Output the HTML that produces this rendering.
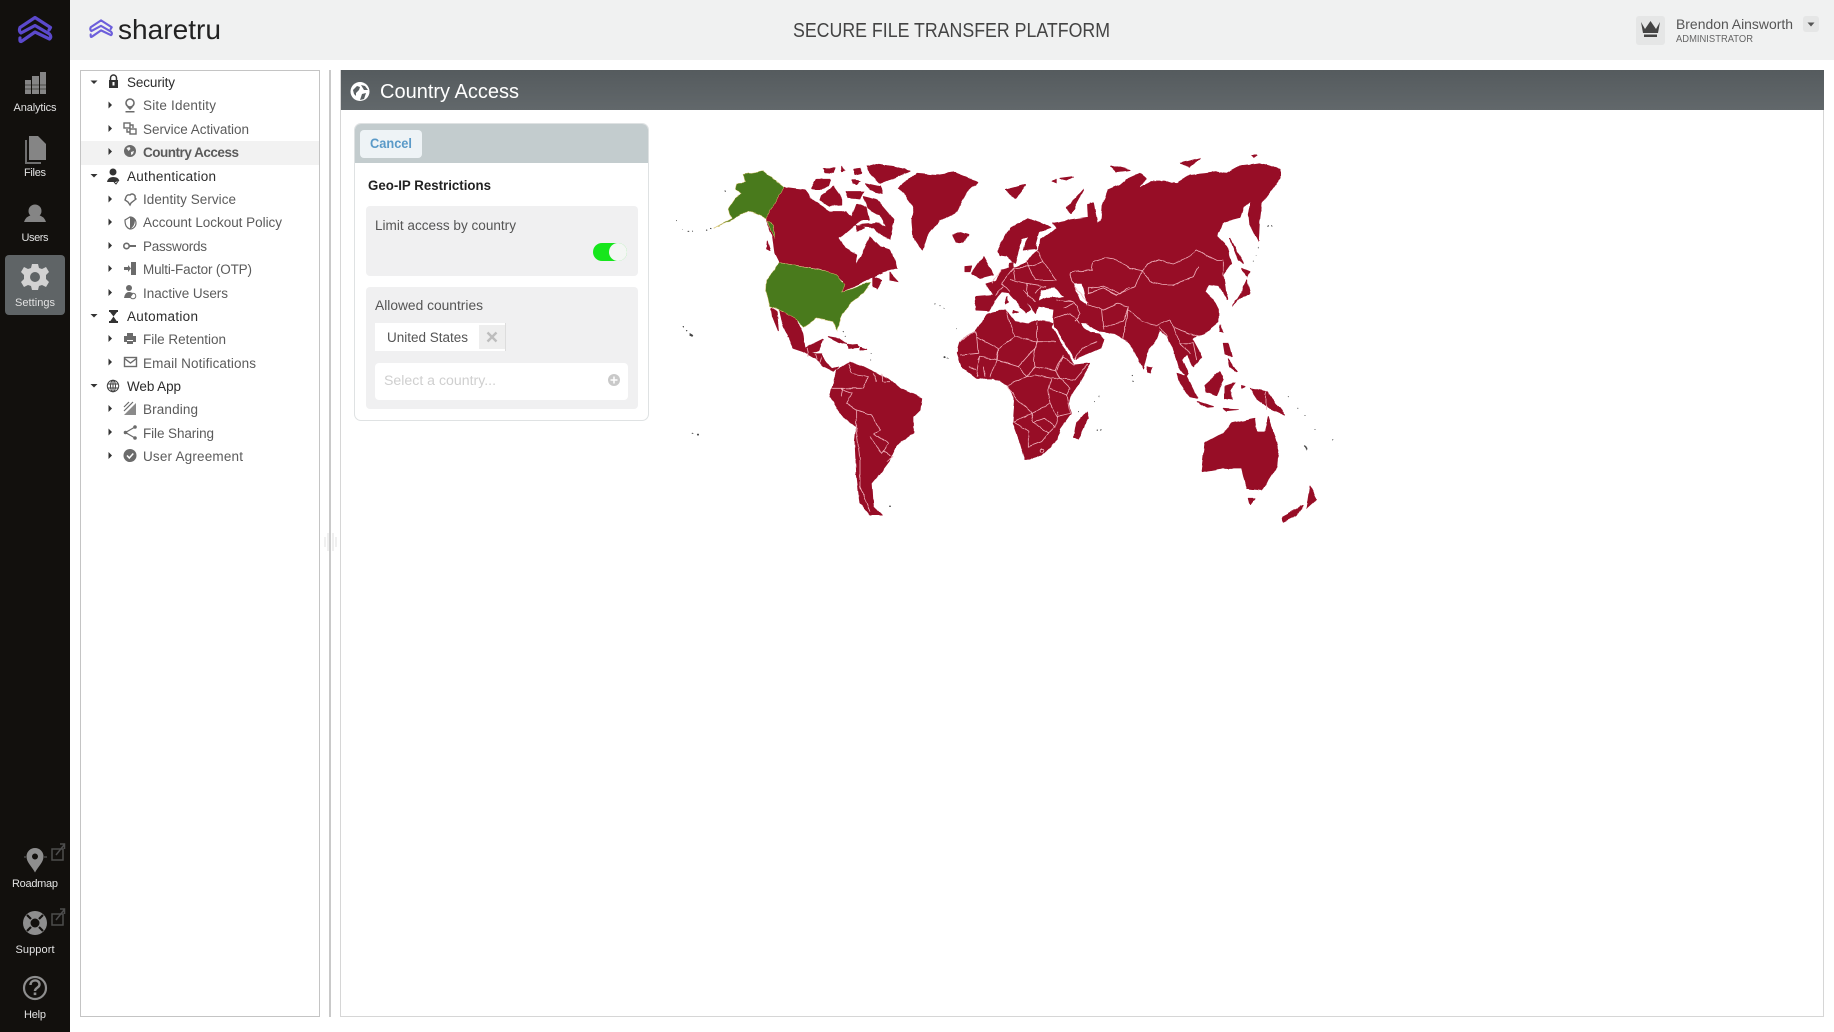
<!DOCTYPE html>
<html lang="en"><head><meta charset="utf-8"><title>Sharetru - Country Access</title>
<style>
html,body{margin:0;padding:0;background:#fff}
body{width:1834px;height:1032px;position:relative;overflow:hidden;font-family:"Liberation Sans",sans-serif}
#w{position:absolute;left:0;top:0;width:1834px;height:1032px;filter:blur(.35px)}
.b{position:absolute;box-sizing:border-box}
svg{position:absolute;left:0;top:0}
text{font-family:"Liberation Sans",sans-serif}
.t1{font-size:13.5px;fill:#2c2c2c}
.t2{font-size:13.5px;fill:#5b5b5b}
.s{font-size:11px;fill:#e2e2e2;text-anchor:middle}
.ic{fill:#6b6b6b}
.il{fill:none;stroke:#6b6b6b;stroke-width:1.4}
.ar{fill:#333}
</style></head><body><div id="w">
<div class="b" style="left:0;top:0;width:70px;height:1032px;background:#12100d"></div>
<div class="b" style="left:70px;top:0;width:1764px;height:60px;background:#f0f1f1"></div>
<div class="b" style="left:5px;top:255px;width:60px;height:60px;background:#5f6466;border-radius:4px"></div>
<div class="b" style="left:80px;top:70px;width:240px;height:947px;border:1px solid #c4c4c4"></div>
<div class="b" style="left:81px;top:141px;width:238px;height:24px;background:#f2f2f2"></div>
<div class="b" style="left:329px;top:70px;width:2px;height:947px;background:#c9c9c9"></div>
<div class="b" style="left:340px;top:70px;width:1484px;height:947px;border:1px solid #d6d6d6;border-top:0"></div>
<div class="b" style="left:341px;top:70px;width:1483px;height:40px;background:linear-gradient(#555b5e,#62686b)"></div>
<div class="b" style="left:354px;top:123px;width:295px;height:298px;border:1px solid #dfe2e3;border-radius:7px;background:#fff;overflow:hidden">
  <div class="b" style="left:0;top:0;width:295px;height:39px;background:#c3ccce"></div>
</div>
<div class="b" style="left:360px;top:130px;width:62px;height:28px;background:#eef3f6;border-radius:4px"></div>
<div class="b" style="left:366px;top:206px;width:272px;height:70px;background:#f0f0f1;border-radius:4px"></div>
<div class="b" style="left:366px;top:287px;width:272px;height:122px;background:#f0f0f1;border-radius:4px"></div>
<div class="b" style="left:593px;top:243px;width:34px;height:18px;background:#16e61c;border-radius:9px"></div>
<div class="b" style="left:609px;top:243px;width:18px;height:18px;background:#f4f6f4;border-radius:9px"></div>
<div class="b" style="left:375px;top:323px;width:131px;height:28px;background:#fff;border-right:1px solid #ddd"></div>
<div class="b" style="left:479px;top:325px;width:26px;height:24px;background:#eeeeee"></div>
<div class="b" style="left:375px;top:363px;width:253px;height:37px;background:#fff;border-radius:4px"></div>
<div class="b" style="left:1636px;top:16px;width:29px;height:29px;background:#e5e6e6;border-radius:3px"></div>
<div class="b" style="left:1803px;top:16px;width:16px;height:16px;background:#e5e6e6;border-radius:3px"></div>

<svg width="1834" height="1032" viewBox="0 0 1834 1032" xmlns="http://www.w3.org/2000/svg">
<defs>
<filter id="rough" filterUnits="userSpaceOnUse" x="-200" y="-100" width="2600" height="1500">
<feTurbulence type="fractalNoise" baseFrequency="0.035" numOctaves="2" seed="4" result="n"/>
<feDisplacementMap in="SourceGraphic" in2="n" scale="9" xChannelSelector="R" yChannelSelector="G"/>
</filter>
</defs>
<!-- sidebar logo -->
<path d="M49 30L50.500 27.500L35 17.500L20 27.500Q18.500 31 21 33L35 25.500L49.500 34Q52 37 49.500 39L35 32L22 41Q19.500 43 20 38" fill="none" stroke="#5b49cc" stroke-width="3.200" stroke-linejoin="round" stroke-linecap="round"/>
<!-- header logo -->
<g transform="translate(90 20) scale(.69) translate(-19 -17)">
<path d="M49 30L50.500 27.500L35 17.500L20 27.500Q18.500 31 21 33L35 25.500L49.500 34Q52 37 49.500 39L35 32L22 41Q19.500 43 20 38" fill="none" stroke="#6d5fdb" stroke-width="3.100" stroke-linejoin="round" stroke-linecap="round"/>
</g>
<text x="118" y="39" font-size="28" fill="#222" textLength="103" lengthAdjust="spacingAndGlyphs">sharetru</text>
<text x="793" y="37" font-size="20" fill="#444" textLength="317" lengthAdjust="spacingAndGlyphs">SECURE FILE TRANSFER PLATFORM</text>
<text x="1676" y="29" font-size="14" fill="#555" textLength="117" lengthAdjust="spacingAndGlyphs">Brendon Ainsworth</text>
<text x="1676" y="42" font-size="10" fill="#666" textLength="77" lengthAdjust="spacingAndGlyphs">ADMINISTRATOR</text>
<path d="M1641 22L1645 29L1650.500 21L1656 29L1660 22L1658 33H1643Z" fill="#444"/><rect x="1644" y="34.500" width="13" height="2.500" fill="#444"/>
<path d="M1807.500 22.500H1814.500L1811 26.500Z" fill="#555"/>

<!-- sidebar icons -->
<g fill="#858585">
<rect x="25" y="80" width="6" height="14"/><rect x="32" y="76" width="7" height="18"/><rect x="40" y="72" width="6" height="22"/>
<path d="M29 136H38L46 144V160H29Z"/><path d="M25 140H27V162H41V164H25Z" fill="#6f6f6f"/>
<circle cx="35" cy="211" r="6.500"/><path d="M24 222Q26 216 32 215H38Q44 216 46 222Z"/>
</g>
<path d="M25 85H46M25 89H46" stroke="#12100d" stroke-width=".6"/>
<text class="s" x="35" y="111" textLength="43">Analytics</text>
<text class="s" x="35" y="176" textLength="22">Files</text>
<text class="s" x="35" y="241" textLength="27">Users</text>
<text class="s" x="35" y="306" textLength="40" fill="#f2f2f2">Settings</text>
<g transform="translate(35 277)" fill="#d2d2d2">
<path d="M-3 -13H3L4 -9L7 -8L11 -10L14 -5L11 -2V2L14 5L11 10L7 8L4 9L3 13H-3L-4 9L-7 8L-11 10L-14 5L-11 2V-2L-14 -5L-11 -10L-7 -8L-4 -9Z"/>
<circle r="5" fill="#5f6466"/>
</g>
<!-- roadmap -->
<path d="M35 848a8.500 8.500 0 0 1 8.500 8.500c0 6-5.500 10-8.500 16c-3 -6-8.500 -10-8.500 -16a8.500 8.500 0 0 1 8.500 -8.500Z" fill="#8e8e8e"/><circle cx="35" cy="856.500" r="3.500" fill="#12100d" stroke="#8e8e8e"/>
<path d="M24 857H26M44 857H47" stroke="#666"/>
<rect x="52" y="849" width="11" height="11" fill="none" stroke="#4d4d4d" stroke-width="1.500"/><path d="M56 855L64 845M60 844H64.500V849" stroke="#4d4d4d" stroke-width="1.500" fill="none"/>
<text class="s" x="35" y="887" textLength="46">Roadmap</text>
<!-- support -->
<circle cx="35" cy="923" r="12" fill="#8e8e8e"/><circle cx="35" cy="923" r="4.500" fill="#12100d"/>
<path d="M27 915L31 919M43 915L39 919M27 931L31 927M43 931L39 927" stroke="#12100d" stroke-width="2.200"/>
<rect x="52" y="914" width="11" height="11" fill="none" stroke="#4d4d4d" stroke-width="1.500"/><path d="M56 920L64 910M60 909H64.500V914" stroke="#4d4d4d" stroke-width="1.500" fill="none"/>
<text class="s" x="35" y="953" textLength="39">Support</text>
<!-- help -->
<circle cx="35" cy="988" r="11" fill="none" stroke="#8e8e8e" stroke-width="2.200"/>
<path d="M30.500 985c0-6 9-6 9 -.5c0 3.500-4.500 3-4.500 6.500" fill="none" stroke="#8e8e8e" stroke-width="2.400"/><rect x="33.700" y="992.500" width="2.600" height="2.600" fill="#8e8e8e"/>
<text class="s" x="35" y="1018" textLength="22">Help</text>

<!-- tree arrows -->
<g class="ar">
<path d="M90.500 80.500h7l-3.500 3.500Z"/><path d="M90.500 174h7l-3.500 3.500Z"/><path d="M90.500 314h7l-3.500 3.500Z"/><path d="M90.500 384h7l-3.500 3.500Z"/>
<path d="M108.500 101.500v7l3.500-3.500Z"/><path d="M108.500 125v7l3.500-3.500Z"/><path d="M108.500 148v7l3.500-3.500Z"/>
<path d="M108.500 195.500v7l3.500-3.500Z"/><path d="M108.500 218.500v7l3.500-3.500Z"/><path d="M108.500 242v7l3.500-3.500Z"/><path d="M108.500 265v7l3.500-3.500Z"/><path d="M108.500 289v7l3.500-3.500Z"/>
<path d="M108.500 335v7l3.500-3.500Z"/><path d="M108.500 358.500v7l3.500-3.500Z"/><path d="M108.500 405v7l3.500-3.500Z"/><path d="M108.500 428.500v7l3.500-3.500Z"/><path d="M108.500 452v7l3.500-3.500Z"/>
</g>
<!-- tree text -->
<text class="t1" x="127" y="87" textLength="48">Security</text>
<text class="t2" x="143" y="110" textLength="73">Site Identity</text>
<text class="t2" x="143" y="134" textLength="106">Service Activation</text>
<text class="t2" x="143" y="157" font-weight="700" textLength="96">Country Access</text>
<text class="t1" x="127" y="181" textLength="89">Authentication</text>
<text class="t2" x="143" y="204" textLength="93">Identity Service</text>
<text class="t2" x="143" y="227" textLength="139">Account Lockout Policy</text>
<text class="t2" x="143" y="251" textLength="64">Passwords</text>
<text class="t2" x="143" y="274" textLength="109">Multi-Factor (OTP)</text>
<text class="t2" x="143" y="298" textLength="85">Inactive Users</text>
<text class="t1" x="127" y="321" textLength="71">Automation</text>
<text class="t2" x="143" y="344" textLength="83">File Retention</text>
<text class="t2" x="143" y="368" textLength="113">Email Notifications</text>
<text class="t1" x="127" y="391" textLength="54">Web App</text>
<text class="t2" x="143" y="414" textLength="55">Branding</text>
<text class="t2" x="143" y="438" textLength="71">File Sharing</text>
<text class="t2" x="143" y="461" textLength="100">User Agreement</text>

<!-- tree icons L1 -->
<g fill="#333">
<path d="M109 80h9v8h-9z"/><path d="M110.500 80v-2a3 3 0 0 1 6 0v2" fill="none" stroke="#333" stroke-width="1.500"/><rect x="112.500" y="82" width="2" height="3.500" fill="#fff"/>
<circle cx="113" cy="172" r="3.500"/><path d="M107 182q1-5 6-5q5 0 6 3l-3 2Z"/><path d="M114 182l2 2l3-4" stroke="#333" fill="none"/>
<path d="M109 310h9v2h-9zM109 321h9v2h-9zM110 312h7l-3.500 4.500l3.500 5h-7l3.500-5Z"/>
</g>
<g fill="none" stroke="#444" stroke-width="1"><circle cx="113" cy="386" r="5.700"/><ellipse cx="113" cy="386" rx="2.500" ry="5.700"/><path d="M107.500 384h11M107.500 388h11M113 380v12"/></g>
<!-- tree icons L2 -->
<g class="ic">
<circle cx="130" cy="103" r="4" fill="none" stroke="#6b6b6b" stroke-width="1.600"/><path d="M127 107l3 3l3-3ZM125.500 111h9v1.500h-9Z"/>
<circle cx="130" cy="151" r="6"/><path d="M126.500 148l3 -1l1 2l-2 2ZM131 152l3-1l-1 3l-2 1Z" fill="#f2f2f2"/>
<path d="M130 217a6 6 0 0 1 0 12c-3-1-5-3-5-9Z" fill="none" stroke="#6b6b6b" stroke-width="1.200"/><path d="M130 217l5 2c0 5-1.500 8-5 10Z"/>
<circle cx="126.500" cy="246" r="2.700" fill="none" stroke="#6b6b6b" stroke-width="1.600"/><path d="M129 245h7v2h-7Z"/>
<path d="M131 262h5v13h-5zM124 267h4v-2l3 3.500l-3 3.500v-2h-4z"/>
<circle cx="129" cy="288" r="3"/><path d="M124 298q1-6 5-6q3 0 4 2l-3 4Z"/><circle cx="133" cy="296" r="2.800" fill="none" stroke="#6b6b6b"/>
<path d="M127 333h6v3h-6ZM124 336h12v6h-3v-2h-6v2h-3ZM127 341h6v3h-6Z"/>
<path d="M124 415L136 403V415Z" fill="#8a8a8a"/><path d="M124 411L133 402M124 407L129 402" stroke="#6b6b6b" stroke-width="1.200"/>
<circle cx="135" cy="427" r="1.800"/><circle cx="125.500" cy="432.500" r="1.800"/><circle cx="135" cy="438" r="1.800"/><path d="M135 427l-9.500 5.500l9.500 5.500" fill="none" stroke="#6b6b6b" stroke-width="1.200"/>
<circle cx="130" cy="455.500" r="6.500"/><path d="M127 455.500l2.300 2.500l4-4.500" fill="none" stroke="#fff" stroke-width="1.500"/>
</g>
<g class="il" stroke-width="1" fill="none">
<rect x="124" y="123" width="6" height="5"/><rect x="130" y="129" width="6" height="5"/><path d="M130 125h3v3M130 132h-3v-3"/>
<path d="M126 197a3 3 0 0 1 4 -2a3 3 0 0 1 5 3l1 1l-5 4l-1 2l-2-3l-3-2Z"/>
<rect x="124.500" y="357.500" width="12" height="9"/><path d="M124.500 358.500l6 4.500l6-4.500"/>
</g>
<!-- content -->
<g><circle cx="360" cy="91.500" r="9.500" fill="#fff"/><path d="M353 90l4-4l3 1l-1 3l-3 3v3l-2-2ZM361 85l4 1l3 4l-4 0ZM362 94l4-1l-2 6l-4 1Z" fill="#5b6164"/></g>
<text x="380" y="98" font-size="20" fill="#fff" textLength="139" lengthAdjust="spacingAndGlyphs">Country Access</text>
<text x="370" y="148" font-size="13.500" font-weight="700" fill="#5b9ac8" textLength="42" lengthAdjust="spacingAndGlyphs">Cancel</text>
<text x="368" y="190" font-size="13.500" font-weight="700" fill="#222" textLength="123" lengthAdjust="spacingAndGlyphs">Geo-IP Restrictions</text>
<text x="375" y="230" font-size="13.500" fill="#555" textLength="141" lengthAdjust="spacingAndGlyphs">Limit access by country</text>
<text x="375" y="310" font-size="13.500" fill="#555" textLength="108" lengthAdjust="spacingAndGlyphs">Allowed countries</text>
<text x="387" y="342" font-size="13.500" fill="#555" textLength="81" lengthAdjust="spacingAndGlyphs">United States</text>
<path d="M487.500 332.500l9 9M496.500 332.500l-9 9" stroke="#bdbdbd" stroke-width="2.400"/>
<text x="384" y="385" font-size="13.500" fill="#cfcfcf" textLength="112" lengthAdjust="spacingAndGlyphs">Select a country...</text>
<circle cx="614" cy="380" r="6" fill="#c9c9c9"/><path d="M610.500 380h7M614 376.500v7" stroke="#fff" stroke-width="1.500"/>
<!-- splitter handle -->
<g stroke="#e1e1e1" stroke-width="1" fill="none"><path d="M325 537v10M328 533v18M333 533v18M336 537v10"/></g>

<!-- MAP -->
<g transform="translate(660 140) scale(.33333)" filter="url(#rough)">
<g fill="#970a26" stroke="#970a26" stroke-width="3" stroke-linejoin="round">
<!-- Canada -->
<path d="M372 142L435 150L450 175L480 195L510 215L560 215L575 232L590 192L620 205L628 240L605 240L570 265L535 295L555 325L590 345L585 378L605 350L630 290L660 320L690 330L710 385L670 395L640 410L600 430L548 452L552 425L530 405L480 385L358 366L345 340L338 290L318 238Z"/>
<path d="M455 145L470 118L510 118L505 135L480 150L465 150ZM485 165L520 140L545 175L545 195L510 197L480 180ZM490 85L525 85L520 100L495 98ZM545 80L555 90L545 92ZM580 88L600 85L605 100L585 105ZM575 120L600 125L590 135L578 130ZM620 80L650 72L700 80L750 92L710 110L660 130L640 110ZM615 130L660 140L665 160L630 150ZM560 155L610 155L600 175L565 172ZM610 170L650 180L680 215L700 240L695 270L690 295L665 285L640 262L610 260L600 255L650 250L680 260L660 225L625 205ZM590 255L615 265L590 272ZM690 398L715 425L690 420ZM640 410L665 420L650 445L640 440ZM322 305L330 330L320 325Z"/>
<!-- Greenland / Iceland -->
<path d="M715 145L770 100L830 105L880 97L952 125L920 155L890 215L840 240L800 290L787 330L760 290L755 235L762 200L740 170Z"/>
<path d="M880 285L900 278L925 285L910 305L890 305Z"/>
<!-- Mexico, central america, caribbean -->
<path d="M358 510L405 530L428 580L435 625L460 612L488 598L475 630L450 640L430 635L400 625L380 580L365 545Z"/>
<path d="M335 505L350 515L355 572L340 535Z"/>
<path d="M450 640L485 640L500 670L515 685L535 680L520 695L490 680L465 655L430 635Z"/>
<path d="M505 590L535 595L560 612L535 605ZM562 615L590 612L595 622L565 625ZM600 622L620 628L600 630Z"/>
<!-- South America -->
<path d="M530 690L570 665L610 680L650 700L690 720L720 745L785 775L780 810L760 830L760 880L710 915L690 960L660 1000L635 1030L640 1100L665 1125L630 1125L600 1090L590 1000L585 900L590 860L540 820L510 770Z"/>
<!-- all eurasia / africa in z5 coords -->
<g transform="translate(900 0)">
<!-- Africa -->
<path d="M-8 640L0 605L45 575L85 522L135 510L150 525L165 545L205 552L230 542L280 548L275 560L325 648L345 675L390 670L360 722L330 770L325 790L332 820L300 865L292 900L245 945L195 960L178 900L160 850L165 780L145 735L100 715L50 715L5 680Z"/>
<!-- Eurasia -->
<path d="M237 328L240 300L290 265L280 250L330 240L385 232L383 195L400 190L412 250L425 235L428 195L445 150L480 135L500 118L540 100L558 115L535 145L570 125L610 125L650 128L690 105L770 95L800 100L840 78L900 70L960 88L960 115L935 150L905 190L898 245L895 305L868 250L865 225L873 180L850 200L840 232L790 245L770 290L800 320L815 370L790 405L800 475L780 440L745 435L735 455L760 480L775 510L775 545L730 582L695 595L725 650L700 680L680 640L665 660L685 705L680 712L655 680L640 625L620 590L600 570L590 597L565 625L549 688L520 625L505 605L492 595L465 580L420 575L380 548L362 548L372 565L392 578L415 582L430 600L420 625L345 658L285 558L282 535L285 508L235 500L228 520L205 490L170 452L195 480L212 508L198 517L170 485L145 458L125 455L112 470L88 512L48 510L45 470L100 465L78 432L112 422L125 392L148 385L150 370L158 368L160 385L200 368L215 350Z"/>
<!-- Scandinavia -->
<path d="M115 330L125 310L150 265L205 235L235 245L272 262L235 275L225 310L232 325L200 328L190 330L205 288L185 295L178 322L165 370L140 348L120 345Z"/>
<path d="M35 400L70 350L100 405L60 415ZM15 380L35 378L30 395L15 395ZM135 150L195 135L165 175ZM320 205L370 148L345 195L335 220ZM275 125L290 118L290 130ZM300 115L340 110L320 120ZM450 75L510 90L470 95ZM660 70L720 55L690 80ZM875 45L890 45L880 52Z"/>
<path d="M563 680L575 682L572 697L563 695ZM650 700L680 710L712 775L690 770L655 720ZM712 785L760 800L740 802ZM735 735L780 695L790 720L770 765L740 755ZM795 740L825 730L810 750L815 778L795 775ZM790 610L805 610L815 650L795 640ZM805 655L830 695L810 680ZM870 745L920 755L975 825L930 805L890 775ZM845 735L855 740L845 745ZM790 805L835 808L800 812Z"/>
<path d="M725 995L735 910L790 880L815 850L885 835L890 875L915 875L925 830L955 930L950 980L905 1050L860 1045L845 985L780 985Z"/>
<path d="M865 1075L885 1075L870 1095ZM1050 1040L1070 1078L1040 1105ZM1028 1098L1010 1125L970 1145L968 1130ZM380 815L385 835L355 897L342 890L350 850ZM782 555L788 578L778 575ZM860 420L870 460L830 480L820 500L845 460L850 440ZM845 385L870 395L860 410ZM810 295L850 370L835 360ZM140 470L145 485L135 490ZM160 510L175 515L160 520Z"/>
</g>
</g>
<!-- white seas -->
<g transform="translate(900 0)" fill="#fff">
<path d="M245 450L285 445L310 470L260 472L235 480L240 462Z"/>
<path d="M340 430L365 430L382 495L360 480L350 455Z"/>
</g>
<!-- USA -->
<g fill="#497a1f" stroke="#d9c46f" stroke-width="1.500">
<path d="M358 368L480 388L530 405L555 435L545 455L590 440L635 425L610 460L570 490L545 530L530 572L520 545L470 535L430 562L405 535L370 515L330 500L318 455L320 420Z"/>
<path d="M250 103L310 92L372 142L318 235L295 225L265 212L225 235L160 265L215 235L205 205L225 175L245 160L225 150L230 130L255 125Z"/>
<path d="M318 238L340 255L346 295L335 275Z"/>
</g>
<!-- borders Americas -->
<g fill="none" stroke="#f0b4bd" stroke-width="2.400">
<path d="M565 670L575 700L625 710L610 745L575 745L540 745M515 745L550 745L545 770M540 745L575 760L560 790L590 810L635 825L660 870L640 880M590 810L590 880L600 960L600 1040L630 1115M640 880L685 910L665 940L630 890M670 935L700 950L680 965M640 700L650 725M665 700L670 725L690 725M440 625L445 650M465 640L470 660M485 650L480 670"/>
</g>
<!-- borders Eurasia / Africa -->
<g transform="translate(900 0)" fill="none" stroke="#f0b4bd" stroke-width="2.400">
<path d="M0 605L45 575M140 515L150 550L165 590L115 625L50 590L45 575M50 590L55 640L0 645M115 625L110 660L175 680L228 620L230 605L165 590M230 545L232 605L288 605M232 605L220 640L225 680L285 690L310 645M290 690L310 650L345 675M385 672L345 720L300 715L285 690M225 680L200 710L175 680M110 660L60 650L55 660M110 660L90 710M60 650L50 710M25 680L50 690M70 680L75 710M140 735L165 770L215 820L270 790L265 750L275 715L225 705L200 710L145 735M275 715L300 715L330 745L320 765L270 745M320 765L330 820L290 830L270 790M160 845L215 820L220 845L265 880L245 905L205 920L205 875L160 845M220 845L255 835L285 860L265 880M295 815L285 860M245 925a6 6 0 1 0 .1 0"/>
<path d="M95 430L125 392M125 430L160 385L205 380M125 430L148 456M150 420L200 430L205 470M160 385L165 420M205 380L200 360M205 380L250 365L232 330M205 380L225 420L290 420L250 365M200 430L260 440M225 460L245 440M190 450L225 485M105 465L130 440"/>
<path d="M330 400L350 395L395 390L400 365L435 352L470 358L510 385L545 392M330 400L340 430M545 392L560 375L595 358L640 372L680 355L710 330L770 360L790 360L790 410M715 380L700 410L640 435L610 435L570 425L545 392M545 392L525 440L480 460L430 440L385 445L385 460L430 445L470 465L510 440M380 495L430 510L470 490L505 500L490 545L430 560M425 510L430 570M505 500L490 595M505 510L545 545L590 555L630 540L640 560L660 610L690 640M600 560L620 590M640 560L685 580L720 590M660 610L700 610L710 660M345 440L385 490M290 480L340 485L360 520L345 545M285 535L330 520L360 550M310 505L340 490M345 658L365 625L410 605"/>
<path d="M918 755L918 810"/>
</g>
<!-- small island dots -->
<g fill="#444">
<path d="M90 580l10 6l-3 6l-9-4Z"/><circle cx="80" cy="572" r="2"/><circle cx="70" cy="560" r="2"/><circle cx="195" cy="155" r="2.500"/>
<circle cx="48" cy="245" r="1.500"/><circle cx="68" cy="268" r="1.800"/><circle cx="86" cy="274" r="1.800"/><circle cx="98" cy="275" r="1.800"/><circle cx="140" cy="272" r="2"/><circle cx="152" cy="267" r="2"/>
<circle cx="100" cy="880" r="1.800"/><circle cx="114" cy="884" r="3"/><circle cx="855" cy="650" r="3"/><circle cx="862" cy="655" r="2"/><circle cx="825" cy="490" r="1.600"/><circle cx="840" cy="497" r="1.600"/><circle cx="852" cy="505" r="1.600"/><circle cx="890" cy="565" r="1.800"/>
<circle cx="632" cy="640" r="1.500"/><circle cx="632" cy="660" r="1.500"/><circle cx="550" cy="575" r="1.800"/><circle cx="556" cy="590" r="1.800"/><circle cx="690" cy="1098" r="3"/>
<circle cx="1417" cy="708" r="1.800"/><circle cx="1417" cy="725" r="1.800"/><circle cx="1318" cy="770" r="2"/><circle cx="1302" cy="785" r="1.500"/><circle cx="1255" cy="815" r="2"/><circle cx="1312" cy="872" r="2"/><circle cx="1322" cy="870" r="2"/><circle cx="1825" cy="257" r="1.800"/><circle cx="1835" cy="258" r="1.500"/>
<circle cx="1885" cy="770" r="1.600"/><circle cx="1915" cy="805" r="1.600"/><circle cx="1935" cy="825" r="1.600"/><circle cx="1965" cy="870" r="1.600"/><circle cx="2020" cy="900" r="1.500"/><path d="M1935 915l8 12l-3 3l-7-12Z"/><circle cx="1795" cy="322" r="1.500"/><circle cx="1790" cy="345" r="1.500"/><circle cx="1780" cy="365" r="1.500"/>
</g>
</g>
</svg>
</div></body></html>
